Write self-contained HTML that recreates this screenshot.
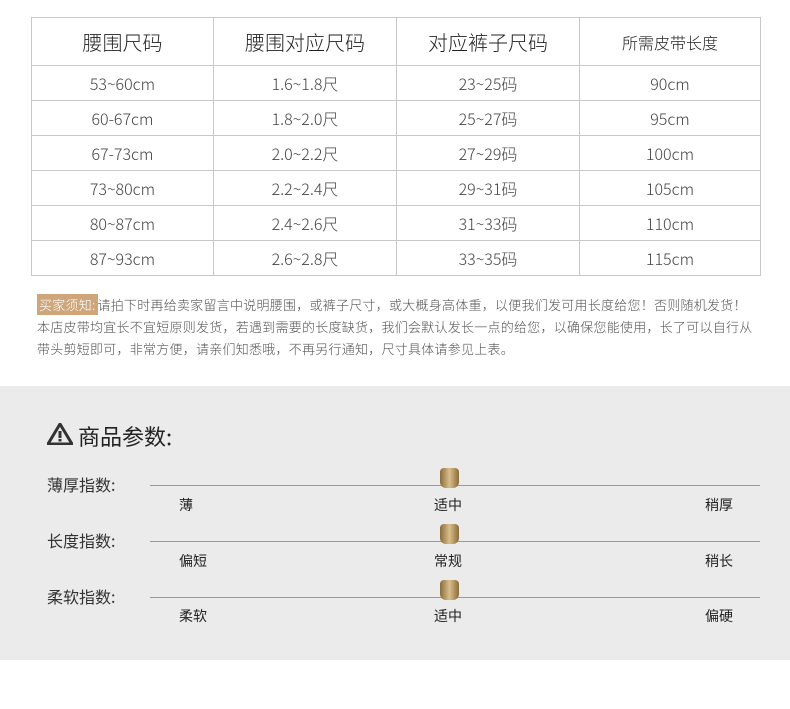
<!DOCTYPE html>
<html><head><meta charset="utf-8"><style>
body{margin:0;width:790px;height:709px;background:#fff;position:relative;font-family:"Noto Sans CJK SC",sans-serif;color:#333;overflow:hidden}
table{position:absolute;left:31px;top:17px;width:730px;border-collapse:collapse}
td{border:1px solid #c8c8c8;text-align:center;height:34px;font-size:16px;color:#444;padding:0;font-weight:300;line-height:20px}
tr.h td{height:47px;font-size:20px;color:#222}
tr.h td:last-child{font-size:16px}
.note{position:absolute;left:37px;top:294px;font-size:13px;line-height:22px;color:#555;white-space:nowrap;letter-spacing:0.25px;font-weight:300}
.tag{background:#cfa679;color:#fff;padding:1px 2px}
.gray{position:absolute;left:0;top:386px;width:790px;height:274px;background:#ebebeb}
.t{position:absolute;font-size:16px;color:#333;line-height:20px}
.line{position:absolute;left:150px;width:610px;height:1px;background:#999}
.knob{position:absolute;left:440px;width:19px;height:20px;border-radius:4px 4px 6px 6px;background:linear-gradient(90deg,#8a6b3b,#d9be8a 50%,#8a6b3b)}
.l{position:absolute;font-size:14px;color:#222;line-height:18px}
</style></head><body>
<table>
<tr class="h"><td style="width:181px">腰围尺码</td><td style="width:182px">腰围对应尺码</td><td style="width:182px">对应裤子尺码</td><td>所需皮带长度</td></tr>
<tr><td>53~60cm</td><td>1.6~1.8尺</td><td>23~25码</td><td>90cm</td></tr>
<tr><td>60-67cm</td><td>1.8~2.0尺</td><td>25~27码</td><td>95cm</td></tr>
<tr><td>67-73cm</td><td>2.0~2.2尺</td><td>27~29码</td><td>100cm</td></tr>
<tr><td>73~80cm</td><td>2.2~2.4尺</td><td>29~31码</td><td>105cm</td></tr>
<tr><td>80~87cm</td><td>2.4~2.6尺</td><td>31~33码</td><td>110cm</td></tr>
<tr><td>87~93cm</td><td>2.6~2.8尺</td><td>33~35码</td><td>115cm</td></tr>
</table>
<div class="note"><span class="tag">买家须知:</span>请拍下时再给卖家留言中说明腰围，或裤子尺寸，或大概身高体重，以便我们发可用长度给您！否则随机发货！<br>本店皮带均宜长不宜短原则发货，若遇到需要的长度缺货，我们会默认发长一点的给您，以确保您能使用，长了可以自行从<br>带头剪短即可，非常方便，请亲们知悉哦，不再另行通知，尺寸具体请参见上表。</div>
<div class="gray">
<svg style="position:absolute;left:47px;top:37px" width="26" height="22" viewBox="0 0 26 22"><path d="M13 1L25 21H1Z" fill="none" stroke="#333" stroke-width="3" stroke-linejoin="round"/><rect x="11.5" y="8" width="3" height="7" fill="#333"/><rect x="11.5" y="16" width="3" height="2.5" fill="#333"/></svg>
<div class="t" style="left:78px;top:37px;font-size:22px;color:#222;line-height:26px">商品参数:</div>
<div class="t" style="left:47px;top:88px">薄厚指数:</div>
<div class="line" style="top:99px"></div><div class="knob" style="top:82px"></div>
<div class="l" style="left:179px;top:110px">薄</div><div class="l" style="left:434px;top:110px">适中</div><div class="l" style="left:705px;top:110px">稍厚</div>
<div class="t" style="left:47px;top:144px">长度指数:</div>
<div class="line" style="top:155px"></div><div class="knob" style="top:138px"></div>
<div class="l" style="left:179px;top:166px">偏短</div><div class="l" style="left:434px;top:166px">常规</div><div class="l" style="left:705px;top:166px">稍长</div>
<div class="t" style="left:47px;top:200px">柔软指数:</div>
<div class="line" style="top:211px"></div><div class="knob" style="top:194px"></div>
<div class="l" style="left:179px;top:221px">柔软</div><div class="l" style="left:434px;top:221px">适中</div><div class="l" style="left:705px;top:221px">偏硬</div>
</div>
</body></html>
